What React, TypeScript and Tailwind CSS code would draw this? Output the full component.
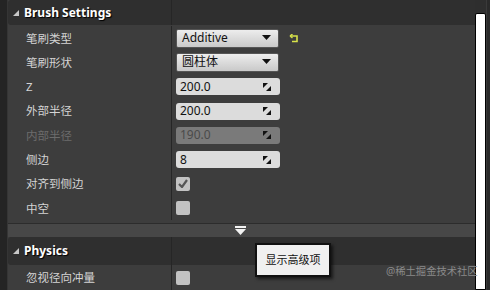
import React from 'react';

const font = { fontFamily: '"Noto Sans", "Noto Sans CJK SC", sans-serif' };

function Caret() {
  return (
    <svg width="8" height="8" viewBox="0 0 8 8" className="mr-[4px]">
      <path d="M7 1 L7 7 L1 7 Z" fill="#c8c8c8" />
    </svg>
  );
}

function SpinIcon() {
  return (
    <svg width="10" height="10" viewBox="0 0 10 10">
      <path d="M1 1 L6 1 L1 6 Z" fill="#111" />
      <path d="M9 9 L4 9 L9 4 Z" fill="#111" />
    </svg>
  );
}

function Dropdown({ value }: { value: string }) {
  return (
    <div className="w-[103px] h-[19px] flex items-center justify-between px-[5px] rounded-[2px] bg-gradient-to-b from-[#ededed] to-[#c9c9c9] border border-[#555] text-[#111] text-[12px]">
      <span>{value}</span>
      <svg width="9" height="6" viewBox="0 0 9 6" className="mr-[2px]">
        <path d="M0 0 L9 0 L4.5 5 Z" fill="#111" />
      </svg>
    </div>
  );
}

function NumberField({ value, disabled }: { value: string; disabled?: boolean }) {
  return (
    <div
      className={
        'w-[104px] h-[17px] flex items-center justify-between pl-[4px] pr-[8px] rounded-[3px] text-[12px] ' +
        (disabled ? 'bg-[#7a7a7a] text-[#4a4a4a]' : 'bg-[#dcdcdc] text-[#111]')
      }
    >
      <span>{value}</span>
      <SpinIcon />
    </div>
  );
}

function Checkbox({ checked }: { checked?: boolean }) {
  return (
    <div className="w-[14px] h-[14px] rounded-[2px] bg-[#c2c2c2] flex items-center justify-center">
      {checked && (
        <svg width="10" height="9" viewBox="0 0 10 9">
          <path d="M1 5 L4 8 L9 1" stroke="#555" strokeWidth="2.2" fill="none" />
        </svg>
      )}
    </div>
  );
}

function Row({ label, disabled, children }: { label: string; disabled?: boolean; children?: React.ReactNode }) {
  return (
    <div className="flex h-[24.3px] items-center">
      <div
        className={
          'w-[163px] pl-[18px] text-[11.5px] ' + (disabled ? 'text-[#6c6c6c]' : 'text-[#d4d4d4]')
        }
      >
        {label}
      </div>
      <div className="w-px self-stretch bg-[#262626]" />
      <div className="flex-1 pl-[4px] flex items-center gap-[10px]">{children}</div>
    </div>
  );
}

function Header({ title, h }: { title: string; h: string }) {
  return (
    <div className={'flex items-center bg-[#2f2f2f] rounded-l-[3px] ' + h}>
      <div className="w-[163px] pl-[4px] flex items-center text-white font-bold text-[12px] [text-shadow:1px_1px_1px_#000]">
        <Caret />
        {title}
      </div>
      <div className="w-px self-stretch bg-[#262626]" />
    </div>
  );
}

export default function App() {
  return (
    <div className="w-[490px] h-[290px] flex bg-[#2b2b2b] overflow-hidden relative" style={font}>
      <div className="w-[8px] bg-[#242424] border-r border-[#353535]" />
      <div className="w-[467px] flex flex-col bg-[#3d3d3d]">
        <Header title="Brush Settings" h="h-[25px]" />
        <div className="flex flex-col pt-[1px] pb-[3px]">
          <Row label="笔刷类型">
            <Dropdown value="Additive" />
            <svg width="10" height="9" viewBox="0 0 10 9">
              <path d="M1 2 H8 V7.5 H3" stroke="#d7e24a" strokeWidth="1.6" fill="none" />
              <path d="M1 2 L3.5 0 M1 2 L3.5 4" stroke="#d7e24a" strokeWidth="1.4" fill="none" />
            </svg>
          </Row>
          <Row label="笔刷形状">
            <Dropdown value="圆柱体" />
          </Row>
          <Row label="Z">
            <NumberField value="200.0" />
          </Row>
          <Row label="外部半径">
            <NumberField value="200.0" />
          </Row>
          <Row label="内部半径" disabled>
            <NumberField value="190.0" disabled />
          </Row>
          <Row label="侧边">
            <NumberField value="8" />
          </Row>
          <Row label="对齐到侧边">
            <Checkbox checked />
          </Row>
          <Row label="中空">
            <Checkbox />
          </Row>
        </div>
        <div className="h-px bg-[#2c2c2c]" />
        <div className="h-[13px] bg-[#474747] flex justify-center items-center">
          <svg width="11" height="9" viewBox="0 0 11 9" className="ml-[-2px]">
            <rect x="0" y="0" width="11" height="2" fill="#f2f2f2" />
            <path d="M0 3 L11 3 L5.5 9 Z" fill="#f2f2f2" />
          </svg>
        </div>
        <Header title="Physics" h="h-[28px]" />
        <Row label="忽视径向冲量">
          <Checkbox />
        </Row>
      </div>
      <div className="flex flex-col w-[11px]">
        <div className="h-[13px] bg-[#2e2e2e]" />
        <div className="flex-1 bg-white border border-black rounded-t-[2px]" />
      </div>
      <div className="flex-1 bg-[#2a2a2a] border-l border-[#3a3a3a]" />

      <div className="absolute left-[255px] top-[243px] w-[76px] h-[34px] bg-[#f0f0f0] border-2 border-[#111] shadow-[2px_2px_3px_rgba(0,0,0,0.6)] flex items-center justify-center text-[11px] text-[#111]">
        显示高级项
      </div>
      <div className="absolute left-[386px] top-[263px] text-[10.3px] leading-[16px] whitespace-nowrap text-[#8a8a8a]">@稀土掘金技术社区</div>
    </div>
  );
}
